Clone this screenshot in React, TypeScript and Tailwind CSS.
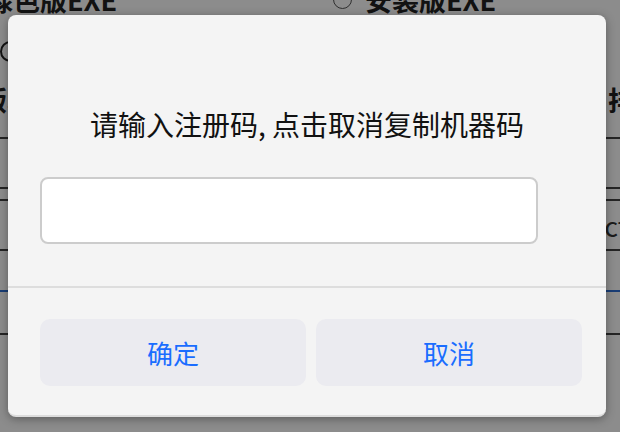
import React from 'react';

const cjk = "font-['Noto_Sans_CJK_SC','Noto_Sans',sans-serif]";

function Radio() {
    return <span className="inline-block h-[19px] w-[19px] shrink-0 rounded-full border-[1.5px] border-[#555] bg-white" />;
}

// page that sits behind the dimmed overlay
function BackgroundPage() {
    return (
        <div className={`flex flex-col ${cjk} font-bold text-[27px] text-[#222]`}>
            <div className="-mt-[15px] flex h-[28px] items-center">
                <span className="-ml-[14px] w-[347px] leading-none">绿色版EXE</span>
                <Radio />
                <span className="ml-[13px] leading-none">安装版EXE</span>
            </div>
            <div className="mt-[26px] flex h-[24px] items-center">
                <span className="inline-block h-[21px] w-[21px] rounded-full border-[2.5px] border-[#222] bg-white" />
            </div>
            <div className="mt-[21px] flex h-[30px] items-center justify-between">
                <span className="-ml-[20px] leading-none">版本</span>
                <span className="-mr-[42px] leading-none">排序</span>
            </div>
            <div className="mt-[23px] h-[2px] bg-[#444]" />
            <div className="h-[48px]" />
            <div className="h-[2px] bg-[#444]" />
            <div className="h-[10px]" />
            <div className="h-[2px] bg-[#444]" />
            <div className="flex h-[48px] items-center justify-end font-normal text-[#333]">
                <span className="-mr-[8px] leading-none">ct</span>
            </div>
            <div className="h-[2px] bg-[#444]" />
            <div className="h-[39px]" />
            <div className="h-[2px] bg-[#2f6fd6]" />
            <div className="h-[41px]" />
            <div className="h-[2px] bg-[#444]" />
        </div>
    );
}

export default function App() {
    return (
        <div className="relative h-[432px] w-[620px] overflow-hidden bg-white">
            <BackgroundPage />

            {/* overlay + dialog */}
            <div className="absolute inset-0 flex items-start bg-black/45 pl-[8px] pt-[15px]">
                <div className={`flex h-[402px] w-[598px] flex-col rounded-[8px] border-b-2 border-[#dcdcdc] bg-[#f4f4f4] shadow-[0_2px_10px_rgba(0,0,0,0.35)] ${cjk}`}>
                    <div className="pt-[91px] text-center text-[28px] leading-[36px] text-[#111]">
                        请输入注册码, 点击取消复制机器码
                    </div>
                    <div className="mt-[35px] pl-[32px]">
                        <input
                            type="text"
                            className="h-[67px] w-[498px] rounded-[8px] border-2 border-[#cccccc] bg-white px-3 text-[22px] outline-none"
                        />
                    </div>
                    <div className="mt-[42px] h-[2px] bg-[#dddddd]" />
                    <div className="mt-[31px] flex gap-[10px] pl-[32px] pr-[24px]">
                        <button className="h-[67px] w-[266px] rounded-[10px] bg-[#ebebf0] text-[26px] text-[#1a6dff]">确定</button>
                        <button className="h-[67px] w-[266px] rounded-[10px] bg-[#ebebf0] text-[26px] text-[#1a6dff]">取消</button>
                    </div>
                </div>
            </div>
        </div>
    );
}
